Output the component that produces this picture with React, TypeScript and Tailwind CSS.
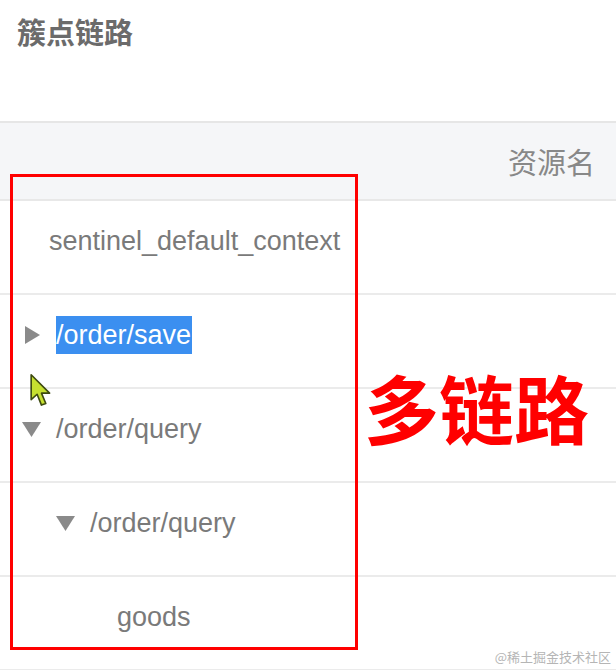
import React from "react";

type Row = {
    label: string;
    pad: number;
    arrow?: "right" | "down";
    selected?: boolean;
};

const rows: Row[] = [
    { label: "sentinel_default_context", pad: 49 },
    { label: "/order/save", pad: 24, arrow: "right", selected: true },
    { label: "/order/query", pad: 22, arrow: "down" },
    { label: "/order/query", pad: 56, arrow: "down" },
    { label: "goods", pad: 117 },
];

function Arrow({ dir }: { dir: "right" | "down" }) {
    if (dir === "right") {
        return (
            <svg width="17" height="18" viewBox="0 0 17 18" className="mr-[15px] shrink-0">
                <path d="M1 0 L16 9 L1 18 Z" fill="#8a8a8a" />
            </svg>
        );
    }
    return (
        <svg width="19" height="16" viewBox="0 0 19 16" className="mr-[15px] shrink-0">
            <path d="M0 1 L19 1 L9.5 16 Z" fill="#8a8a8a" />
        </svg>
    );
}

function Cursor() {
    return (
        <svg width="26" height="36" viewBox="0 0 24 32" className="absolute left-[29px] top-[373px]">
            <path
                d="M2 1 L2 24 L7.5 19 L11.5 29 L15.5 27.5 L11.5 18 L19 18 Z"
                fill="#c6e030"
                stroke="#3d4a10"
                strokeWidth="1.5"
                strokeLinejoin="round"
            />
        </svg>
    );
}

export default function App() {
    return (
        <div className="relative w-[616px] h-[670px] overflow-hidden bg-white font-['Liberation_Sans','Noto_Sans_CJK_SC',sans-serif]">
            <div className="h-[121px] pl-[17px] pt-[12px]">
                <h1 className="text-[29px] leading-[38px] font-bold text-[#6b6b6b] font-['Noto_Sans_CJK_SC',sans-serif]">
                    簇点链路
                </h1>
            </div>

            <div className="border-t-2 border-[#e6e6e6]">
                <div className="h-[78px] bg-[#f5f6f8] flex items-center justify-end pr-[21px] pt-[2px] border-b-2 border-[#e8e8e8]">
                    <span className="text-[29px] text-[#888] font-['Noto_Sans_CJK_SC',sans-serif]">资源名</span>
                </div>

                {rows.map((row, i) => (
                    <div
                        key={i}
                        className="h-[94px] flex items-center pb-[12px] border-b-2 border-[#ebebeb]"
                        style={{ paddingLeft: row.pad }}
                    >
                        {row.arrow && <Arrow dir={row.arrow} />}
                        <span
                            className={
                                row.selected
                                    ? "text-[27px] leading-[38px] bg-[#3b8ff0] text-white pr-[1px]"
                                    : "text-[27px] leading-[38px] text-[#7a7a7a]"
                            }
                        >
                            {row.label}
                        </span>
                    </div>
                ))}
            </div>

            <Cursor />

            <div className="absolute left-[10px] top-[174px] w-[348px] h-[476px] border-[3px] border-[#ff0000]" />

            <div className="absolute left-[364px] top-[362px] text-[75px] leading-[90px] font-bold text-[#ff0000] font-['Noto_Sans_CJK_SC',sans-serif]">
                多链路
            </div>

            <div className="absolute right-[5px] bottom-[4px] text-[13px] text-[#b5b5b5] font-['Noto_Sans_CJK_SC',sans-serif]">
                @稀土掘金技术社区
            </div>
        </div>
    );
}
